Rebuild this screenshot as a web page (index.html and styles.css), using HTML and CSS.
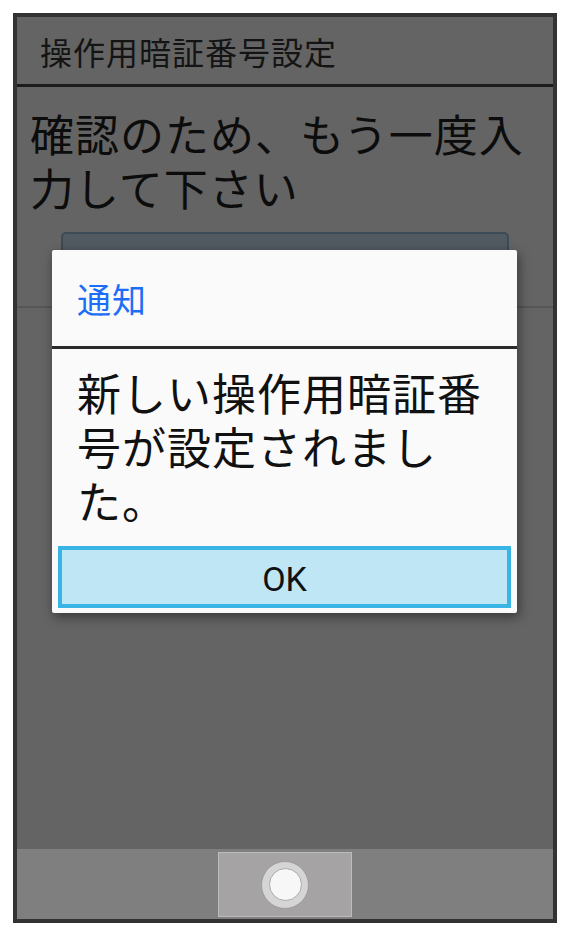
FILE: index.html
```html
<!DOCTYPE html>
<html lang="ja">
<head>
  <meta charset="UTF-8" />
  <meta name="viewport" content="width=device-width, initial-scale=1.0"/>
  <title>操作用暗証番号設定</title>
  <link rel="stylesheet" href="styles.css">
</head>
<body>
  <div class="phone">
    <header class="title-bar">操作用暗証番号設定</header>

    <main class="screen">
      <p class="prompt">確認のため、もう一度入力して下さい</p>
      <div class="pin-field"></div>
      <div class="rule"></div>
    </main>

    <nav class="nav-bar">
      <button class="home" aria-label="home">
        <span class="home-ring"><span class="home-dot"></span></span>
      </button>
    </nav>

    <div class="dialog">
      <div class="dialog-title">通知</div>
      <p class="dialog-message">新しい操作用暗証番号が設定されました。</p>
      <button class="ok-btn">OK</button>
    </div>
  </div>
</body>
</html>
```

FILE: styles.css
```css
* {
  margin: 0;
  padding: 0;
  box-sizing: border-box;
}

body {
  background: #fff;
  font-family: "Noto Sans CJK JP", "Noto Sans", sans-serif;
}

.phone {
  position: relative;
  margin: 13px;
  width: 544px;
  height: 910px;
  border: 4px solid #333;
  display: flex;
  flex-direction: column;
  background: #646464;
}

.title-bar {
  height: 70px;
  padding-left: 23px;
  display: flex;
  align-items: center;
  border-bottom: 3px solid #1c1c1c;
  font-size: 32px;
  letter-spacing: 1px;
  color: #141414;
}

.screen {
  flex: 1;
  background: #646464;
}

.prompt {
  padding: 19px 13px 0;
  font-size: 44px;
  line-height: 54px;
  letter-spacing: 1px;
  color: #0c0c0c;
}

.pin-field {
  margin: 18px 44px 0 44px;
  height: 62px;
  background: #515961;
  border: 2px solid #3d4b57;
  border-radius: 5px;
}

.rule {
  margin-top: 12px;
  height: 2px;
  background: #565656;
}

.nav-bar {
  height: 70px;
  background: #7f7f7f;
  display: flex;
  justify-content: center;
  padding-top: 3px;
}

.home {
  width: 134px;
  height: 65px;
  background: #a5a3a4;
  border: 1px solid #bcbcbc;
  display: flex;
  align-items: center;
  justify-content: center;
}

.home-ring {
  width: 48px;
  height: 48px;
  border-radius: 50%;
  background: #d5d5d5;
  border: 1px solid #9c9c9c;
  display: flex;
  align-items: center;
  justify-content: center;
}

.home-dot {
  width: 33px;
  height: 33px;
  border-radius: 50%;
  background: #f7f7f7;
  border: 1px solid #a9a9a9;
}

.dialog {
  position: absolute;
  left: 35px;
  top: 233px;
  width: 465px;
  height: 363px;
  background: #fafafa;
  border-radius: 2px;
  box-shadow: 2px 4px 12px rgba(0, 0, 0, 0.45);
  display: flex;
  flex-direction: column;
}

.dialog-title {
  height: 99px;
  padding-left: 25px;
  display: flex;
  align-items: center;
  border-bottom: 3px solid #2a2a2a;
  font-size: 34px;
  letter-spacing: 1px;
  color: #1d6ef7;
}

.dialog-message {
  padding: 16px 20px 0 25px;
  font-size: 44px;
  line-height: 54px;
  letter-spacing: 1px;
  color: #111;
}

.ok-btn {
  margin: auto 6px 5px;
  height: 62px;
  padding-top: 3px;
  border: 4px solid #38b5e5;
  background: #bee6f4;
  font-family: Roboto, "Noto Sans", sans-serif;
  font-size: 34px;
  color: #111;
}
```
